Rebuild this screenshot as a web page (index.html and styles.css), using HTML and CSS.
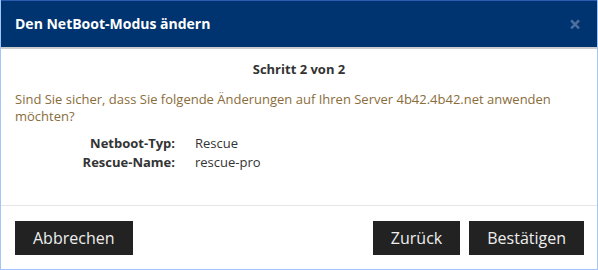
FILE: index.html
```html
<!DOCTYPE html>
<html lang="de">
<head>
<meta charset="UTF-8">
<meta name="viewport" content="width=device-width, initial-scale=1.0">
<title>Den NetBoot-Modus ändern</title>
<link rel="stylesheet" href="styles.css">
</head>
<body>
<div class="modal">
    <!-- Header -->
    <div class="modal-header">
        <h4 class="modal-title">Den NetBoot-Modus ändern</h4>
        <span class="close">&times;</span>
    </div>
    <!-- Body -->
    <div class="modal-body">
        <h5 class="step">Schritt 2 von 2</h5>
        <p class="text-warning">Sind Sie sicher, dass Sie folgende Änderungen auf Ihren Server 4b42.4b42.net anwenden möchten?</p>
        <dl class="dl-horizontal">
            <dt>Netboot-Typ:</dt>
            <dd>Rescue</dd>
            <dt>Rescue-Name:</dt>
            <dd>rescue-pro</dd>
        </dl>
    </div>
    <!-- Footer -->
    <div class="modal-footer">
        <button class="btn">Abbrechen</button>
        <div class="right">
            <button class="btn">Zurück</button>
            <button class="btn">Bestätigen</button>
        </div>
    </div>
</div>
</body>
</html>
```
FILE: styles.css
```css
body {
    margin: 0;
    font-family: "Open Sans", Arial, sans-serif;
    font-size: 13px;
    line-height: 1.42857;
    color: #333;
    background: #fff;
}
.modal {
    width: 598px;
    height: 270px;
    box-sizing: border-box;
    border: 1px solid #a3c4f7;
    border-top: none;
    display: flex;
    flex-direction: column;
}
.modal-header {
    background-color: #003471;
    border-top: 1px solid #2b5cb3;
    border-bottom: 2px solid #cccccc;
    padding: 13px 14px;
    display: flex;
    justify-content: space-between;
    align-items: center;
}
.modal-title {
    margin: 0;
    font-size: 14px;
    font-weight: 700;
    line-height: 20px;
    color: #fff;
}
.close {
    font-size: 21px;
    font-weight: 700;
    line-height: 20px;
    color: #fff;
    opacity: 0.3;
    margin-right: 2px;
    cursor: pointer;
}
.modal-body {
    padding: 10px 14px 0;
    flex: 1;
}
.step {
    margin: 0 0 12px;
    text-align: center;
    font-size: 13px;
    font-weight: 700;
    line-height: 20px;
    color: #333;
}
.text-warning {
    color: #8a6d3b;
    margin: 0 0 9px;
    line-height: 17px;
}
.dl-horizontal {
    margin: 0;
    display: grid;
    grid-template-columns: 160px 1fr;
    column-gap: 20px;
}
.dl-horizontal dt {
    text-align: right;
    font-weight: 700;
}
.dl-horizontal dd {
    margin: 0;
}
.modal-footer {
    border-top: 1px solid #e5e5e5;
    padding: 15px 13px 14px 14px;
    display: flex;
    justify-content: space-between;
}
.right {
    display: flex;
    gap: 9px;
}
.btn {
    height: 34px;
    padding: 0 18px;
    border: none;
    border-radius: 0;
    background-color: #222;
    color: #eee;
    font-family: "Open Sans", Arial, sans-serif;
    font-size: 16px;
    cursor: pointer;
}
.btn:hover {
    background-color: #000;
}
```
